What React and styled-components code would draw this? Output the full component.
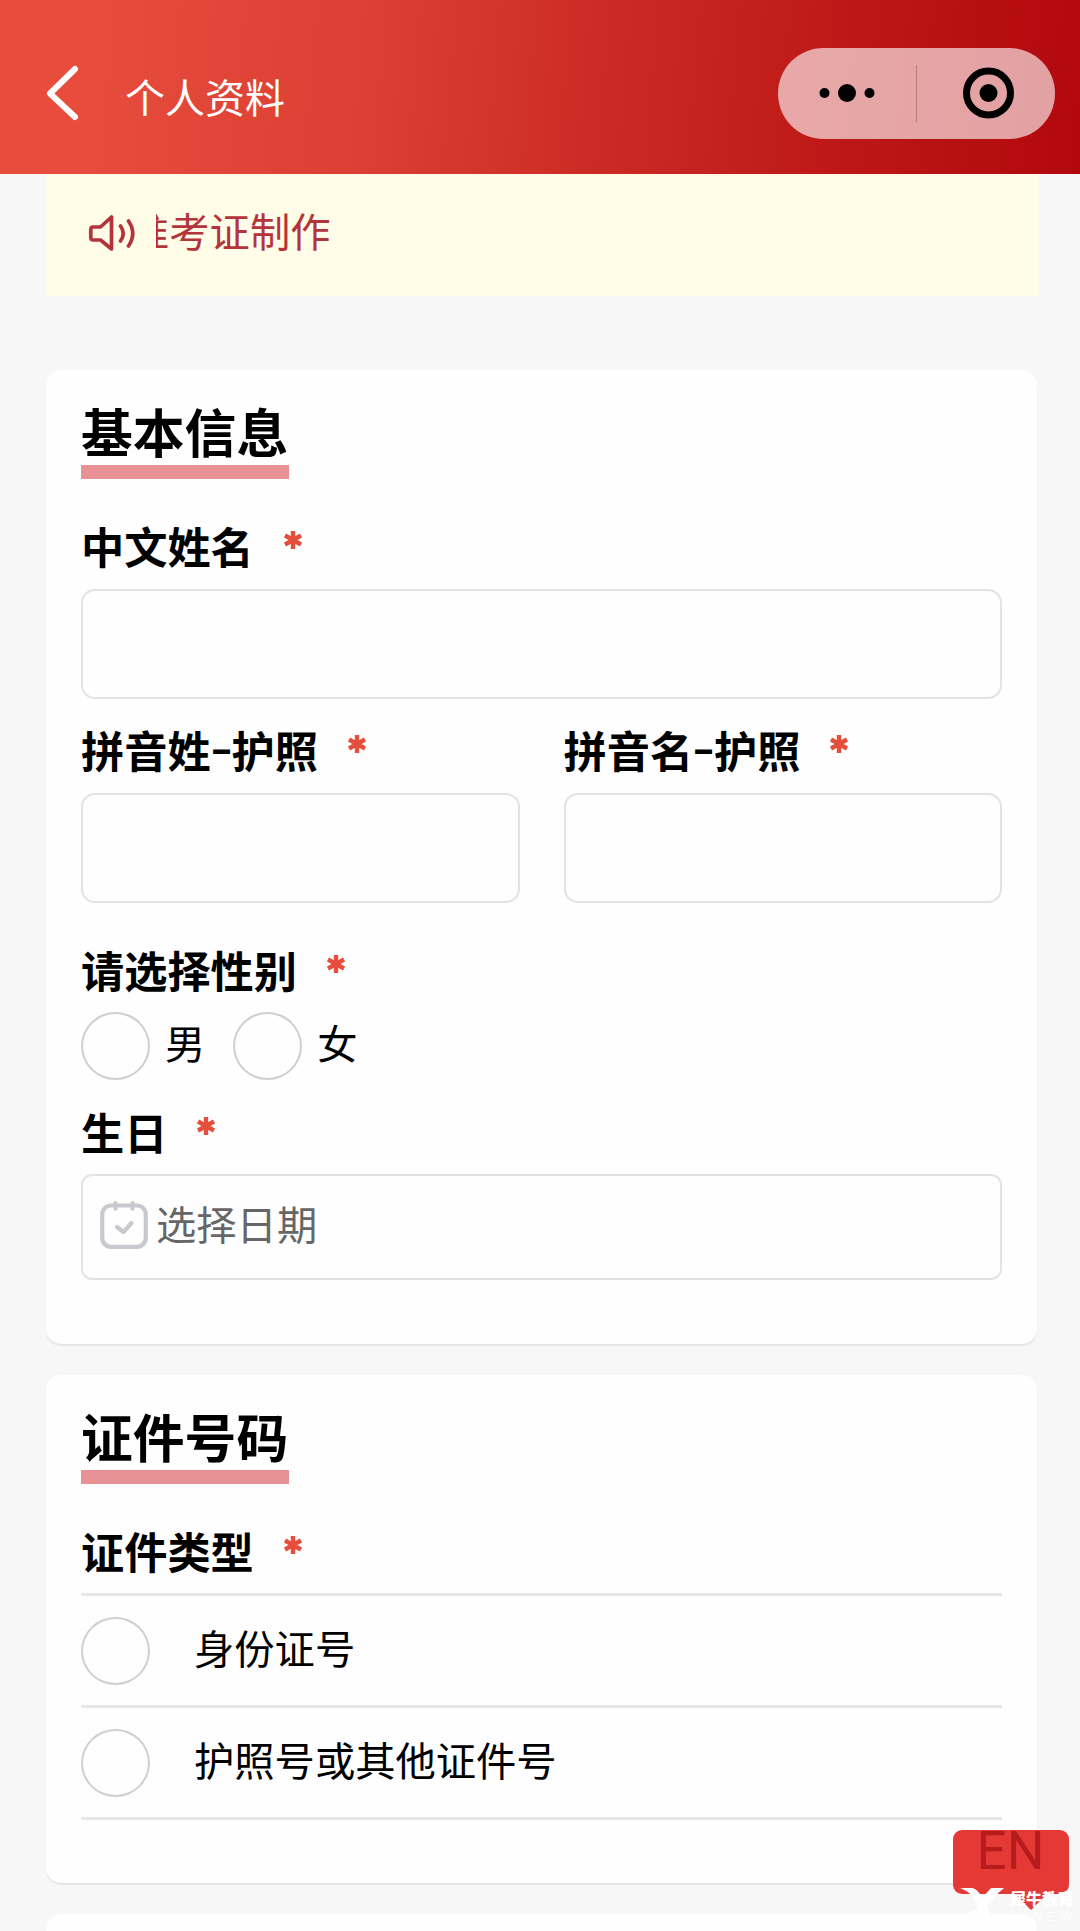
import React from "react";
import styled, { createGlobalStyle } from "styled-components";

const GlobalStyle = createGlobalStyle`
  * {
    box-sizing: border-box;
  }
  body {
    margin: 0;
    background: #f7f7f7;
    font-family: "Noto Sans CJK SC", "Noto Sans", sans-serif;
    color: #000;
  }
`;

const Page = styled.div`
  width: 1080px;
  height: 1931px;
  overflow: hidden;
  position: relative;
  display: flex;
  flex-direction: column;
`;

const Header = styled.header`
  flex: none;
  height: 174px;
  padding: 12px 25px 0 46px;
  display: flex;
  align-items: center;
  background: linear-gradient(95deg, #e74c3c 8%, #dc3f33 34%, #cd2d26 53%, #bd1817 78%, #b1080d 100%);
`;

const BackIcon = styled.svg`
  width: 33px;
  height: 56px;
`;

const HeaderTitle = styled.h1`
  margin: 0 0 0 46px;
  font-size: 40px;
  line-height: 60px;
  font-weight: 400;
  color: #fff;
  flex: 1;
  padding-top: 5px;
`;

const Capsule = styled.div`
  width: 277px;
  height: 91px;
  border-radius: 46px;
  background: rgba(255, 255, 255, 0.62);
  display: flex;
  align-items: center;
`;

const CapsuleHalf = styled.div`
  flex: 1;
  display: flex;
  align-items: center;
  justify-content: center;
`;

const CapsuleDivider = styled.span`
  width: 1px;
  height: 57px;
  background: rgba(120, 50, 50, 0.4);
`;

const Notice = styled.div`
  flex: none;
  height: 122px;
  margin: 0 41px 74px 46px;
  padding: 0 0 8px 42px;
  display: flex;
  align-items: center;
  background: #fffce8;
  color: #b3343a;
`;

const NoticeIcon = styled.svg`
  width: 48px;
  height: 40px;
`;

const NoticeWindow = styled.div`
  margin: 0 0 2px 20px;
  flex: 1;
  overflow: hidden;
  display: flex;
`;

const NoticeText = styled.span`
  margin-left: -27px;
  font-size: 40.3px;
  line-height: 56px;
  white-space: nowrap;
`;

const Card = styled.section`
  flex: none;
  height: ${props => props.$height}px;
  margin: 0 43px 31px 46px;
  padding: 26px 35px 0;
  background: #fefefe;
  border-radius: 15px;
  box-shadow: 0 2px 1px #e5e5e5;
`;

const CardTitle = styled.h2`
  margin: 0 0 36px;
  width: 208px;
  height: 83px;
  font-size: 51.8px;
  line-height: 70px;
  font-weight: 700;
  white-space: nowrap;
  border-bottom: 14px solid #e89195;
`;

const Label = styled.div`
  display: flex;
  height: 60px;
  margin-top: ${props => props.$top || 0}px;
  font-size: 43.2px;
  line-height: 60px;
  font-weight: 700;
  white-space: nowrap;
`;

const Dash = styled.span`
  width: 21px;
  font-family: Inter, sans-serif;
  font-weight: 600;
  text-align: center;
  transform: scaleX(1.2);
`;

const Star = styled.svg`
  width: 18px;
  height: 18px;
  margin: 16px 0 0 30px;
`;

const Field = styled.div`
  height: ${props => props.$height || 110}px;
  margin-top: ${props => props.$top || 14}px;
  padding-left: 17px;
  display: flex;
  align-items: center;
  border: 2px solid #e3e3e3;
  border-radius: ${props => props.$radius || 14}px;
`;

const Columns = styled.div`
  display: grid;
  grid-template-columns: 1fr 1fr;
  column-gap: 44px;
`;

const CalendarIcon = styled.svg`
  width: 48px;
  height: 48px;
  margin-bottom: 4px;
`;

const Placeholder = styled.span`
  margin-left: 8px;
  font-size: 40.3px;
  line-height: 56px;
  color: #666;
  padding-bottom: 9px;
`;

const RadioGroup = styled.div`
  display: flex;
  align-items: center;
  margin-top: 13px;
  height: 68px;
`;

const Circle = styled.span`
  flex: none;
  width: 69px;
  height: 68px;
  border: 2px solid #cfcfcf;
  border-radius: 50%;
`;

const RadioText = styled.span`
  margin: 0 28px 9px 15px;
  font-size: 40.3px;
  line-height: 56px;
`;

const OptionList = styled.div`
  margin-top: 13px;
  border-top: 3px solid #e7e7e7;
`;

const Option = styled.div`
  height: 112px;
  display: flex;
  align-items: center;
  border-bottom: 3px solid #e7e7e7;
`;

const OptionText = styled.span`
  margin: 0 0 8px 44px;
  font-size: 40.3px;
  line-height: 56px;
`;

const LangBadge = styled.div`
  position: absolute;
  left: 953px;
  top: 1830px;
  width: 116px;
  height: 64px;
  padding-right: 1px;
  border-radius: 9px;
  background: #e53935;
  color: #b71c1c;
  font-family: Roboto, sans-serif;
  font-size: 53px;
  line-height: 42px;
  text-align: center;
  &::after {
    content: "";
    position: absolute;
    left: 62px;
    top: 64px;
    border: 16px solid transparent;
    border-top-color: #e53935;
    border-bottom: 0;
  }
`;

const Watermark = styled.div`
  position: absolute;
  left: 955px;
  top: 1888px;
  display: flex;
  color: #fff;
`;

const WatermarkText = styled.div`
  margin-left: 1px;
  font-size: 16px;
  font-weight: 900;
  line-height: 20px;
  white-space: nowrap;
`;

const WatermarkSub = styled.div`
  font-family: "Liberation Sans", sans-serif;
  font-size: 13px;
  font-weight: 400;
  letter-spacing: 4.8px;
  line-height: 18px;
  opacity: 0.85;
`;

const Required = () => (
  <Star viewBox="0 0 18 18" stroke="#e54d3c" strokeWidth="4.4">
    <path d="M9 0v18M1 4.500l16 9M17 4.500l-16 9" />
  </Star>
);

const App = () => (
  <Page>
    <GlobalStyle />
    <Header>
      <BackIcon viewBox="0 0 33 56" fill="none" stroke="#fff" strokeWidth="6" strokeLinecap="round" strokeLinejoin="round">
        <path d="M29 4L4 28.500L29 52" />
      </BackIcon>
      <HeaderTitle>个人资料</HeaderTitle>
      <Capsule>
        <CapsuleHalf>
          <svg width="56" height="18">
            <circle cx="5.500" cy="9" r="5" />
            <circle cx="28" cy="9" r="9" />
            <circle cx="50.500" cy="9" r="5" />
          </svg>
        </CapsuleHalf>
        <CapsuleDivider />
        <CapsuleHalf>
          <svg width="58" height="52">
            <circle cx="31.500" cy="26" r="22" fill="none" stroke="#000" strokeWidth="7" />
            <circle cx="31.500" cy="26" r="9" />
          </svg>
        </CapsuleHalf>
      </Capsule>
    </Header>

    <Notice>
      <NoticeIcon viewBox="0 0 48 40" fill="none" stroke="#b3343a" strokeWidth="3.7" strokeLinejoin="round" strokeLinecap="round">
        <path d="M23.500 6v32L12.500 29H5Q2.800 29 2.800 26.500v-8Q2.800 16 5 16h7.500z" />
        <path d="M32.500 15q5.500 7.500 0 15M40.500 10q8.500 12.500 0 25" />
      </NoticeIcon>
      <NoticeWindow>
        <NoticeText>准考证制作</NoticeText>
      </NoticeWindow>
    </Notice>

    <Card $height={974}>
      <CardTitle>基本信息</CardTitle>
      <Label>
        中文姓名
        <Required />
      </Label>
      <Field />
      <Columns>
        <div>
          <Label $top={20}>
            拼音姓<Dash>-</Dash>护照
            <Required />
          </Label>
          <Field />
        </div>
        <div>
          <Label $top={20}>
            拼音名<Dash>-</Dash>护照
            <Required />
          </Label>
          <Field />
        </div>
      </Columns>
      <Label $top={36}>
        请选择性别
        <Required />
      </Label>
      <RadioGroup>
        <Circle />
        <RadioText>男</RadioText>
        <Circle />
        <RadioText>女</RadioText>
      </RadioGroup>
      <Label $top={21}>
        生日
        <Required />
      </Label>
      <Field $height={106} $radius={11} $top={13}>
        <CalendarIcon viewBox="0 0 48 48" fill="none" stroke="#c8c9cf" strokeWidth="4.2" strokeLinecap="round" strokeLinejoin="round">
          <rect x="2.200" y="4.500" width="43.600" height="41.300" rx="9" />
          <path d="M15.500 2.200v5.500M32.500 2.200v5.500M17 26l6.500 5 8-9" />
        </CalendarIcon>
        <Placeholder>选择日期</Placeholder>
      </Field>
    </Card>

    <Card $height={508}>
      <CardTitle>证件号码</CardTitle>
      <Label>
        证件类型
        <Required />
      </Label>
      <OptionList>
        <Option>
          <Circle />
          <OptionText>身份证号</OptionText>
        </Option>
        <Option>
          <Circle />
          <OptionText>护照号或其他证件号</OptionText>
        </Option>
      </OptionList>
    </Card>

    <Card $height={200} />

    <LangBadge>EN</LangBadge>
    <Watermark>
      <svg width="54" height="40" viewBox="0 0 54 40" fill="#fff">
        <path d="M5 0h12q6 1 10 10l9-10h13Q37 10 32 18l5 13q4 5 12 6-14 1-18-5l-3-7Q22 36 5 38q-4-6-5-13 8 5 22-5Q21 6 5 0z" />
      </svg>
      <WatermarkText>
        犀牛教育
        <WatermarkSub>X-NEW</WatermarkSub>
      </WatermarkText>
    </Watermark>
  </Page>
);

export default App;
